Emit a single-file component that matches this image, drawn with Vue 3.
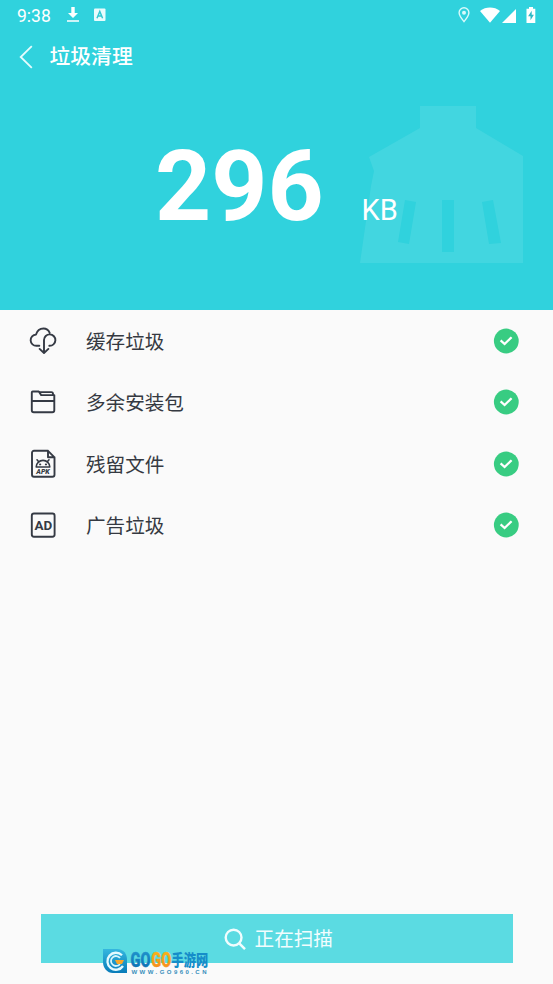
<script setup>
const items = [
  { icon: 'cloud', label: '缓存垃圾' },
  { icon: 'folder', label: '多余安装包' },
  { icon: 'apk', label: '残留文件' },
  { icon: 'ad', label: '广告垃圾' },
]
</script>

<template>
  <main class="screen">
    <section class="hero">
      <div class="status">
        <span class="time">9:38</span>
        <svg class="download" width="14" height="18" viewBox="0 0 14 18">
          <path d="M5.3 1h3.4v6H12l-5 5-5-5h3.3zM1 14.2h12v1.6H1z" fill="#fff" />
        </svg>
        <svg class="badge-a" width="12" height="14" viewBox="0 0 12 14">
          <rect width="11.5" height="12.5" y=".5" rx="1" fill="#e9fcfd" />
          <path d="M3 10.2 5.8 3.4l2.8 6.8M4 8h3.6" fill="none" stroke="#35c8d2" stroke-width="1.5" />
        </svg>
        <span class="spacer"></span>
        <svg class="pin" width="14" height="18" viewBox="0 0 14 18">
          <path d="M7 15.6C4.2 12.1 2.1 9.3 2.1 6.7a4.9 4.9 0 0 1 9.8 0c0 2.6-2.1 5.4-4.9 8.9z" fill="none" stroke="#d9fafb" stroke-width="1.4" />
          <circle cx="7" cy="6.7" r="2" fill="#d9fafb" />
        </svg>
        <svg class="wifi" width="20" height="16" viewBox="0 0 20 16">
          <path d="M0 4C5.8-.6 14.2-.6 20 4L10 15.8z" fill="#fff" />
        </svg>
        <svg class="signal" width="14" height="14" viewBox="0 0 14 14"><path d="M14 0v14H0z" fill="#fff" /></svg>
        <svg class="battery" width="10" height="16" viewBox="0 0 10 16">
          <path d="M3 0h4v1.7h2.3V16H.5V1.7H3z" fill="#fff" />
          <path d="M5.7 3.8 2.1 9.3h2.4v4L7.9 7.8H5.7z" fill="#2fb9c5" />
        </svg>
      </div>
      <header class="header">
        <svg class="back" width="14" height="24" viewBox="0 0 14 24">
          <path d="M12.8 1.2 1.7 12l11.1 10.8" fill="none" stroke="#e5fcfd" stroke-width="1.8" />
        </svg>
        <h1>垃圾清理</h1>
      </header>
      <div class="reading"><strong>296</strong><span>KB</span></div>
      <svg class="broom" width="164" height="158" viewBox="0 0 164 158">
        <path fill-rule="evenodd" fill="#fff" fill-opacity=".09" d="M60 0h56v22l47 28v107H0l11-77 3-15-5-14 51-29zM45 94l-7 42 11 2 7-42zM82 94v52h12V94zM122 96l7 42 12-1-8-43z" />
      </svg>
    </section>

    <ul class="list">
      <li v-for="item in items" :key="item.icon">
        <svg class="item-icon" width="30" height="30" viewBox="0 0 30 30" fill="none" stroke="#353a44" stroke-width="1.9" stroke-linecap="round" stroke-linejoin="round">
          <template v-if="item.icon === 'cloud'">
            <path d="M11.3 19.8H8.5a5.6 5.6 0 0 1-.5-11.2C9.1 4.8 12 2.5 15.5 2.5c2.8 0 5 1.5 6.2 4.3M21.3 19.8a5.7 5.7 0 1 0-5.3-5.7v12.6M11.6 22.9l4.4 4.1 4.4-4.1" />
          </template>
          <template v-else-if="item.icon === 'folder'">
            <path d="M4.8 4.5h6l2.4 3.6h13.1v15.1a2 2 0 0 1-2 2H5.8a2 2 0 0 1-2-2V5.5a1 1 0 0 1 1-1zM4 14h22.3M12 5.1h11.3q1.8 0 1.8 2.4" />
          </template>
          <template v-else-if="item.icon === 'apk'">
            <path d="M6 1.8h14l6.5 6.5v17.5a2 2 0 0 1-2 2H6a2 2 0 0 1-2-2v-22a2 2 0 0 1 2-2zM20 1.8v6.5h6.5" />
            <path d="M8.2 18a6.8 6.6 0 0 1 13.6 0zM10.5 12.6 9 10.8M19.5 12.6l1.5-1.8" stroke-width="1.6" />
            <path d="M12 15.4h.3M17.8 15.4h.3" stroke-width="1.9" />
            <text x="15" y="25.3" class="apk-text">APK</text>
          </template>
          <template v-else>
            <rect x="3.8" y="3.5" width="22.8" height="23.2" rx="2.2" />
            <text x="6.4" y="20" textLength="17.8" lengthAdjust="spacingAndGlyphs" class="ad-text">AD</text>
          </template>
        </svg>
        <span class="label">{{ item.label }}</span>
        <svg class="check" width="26" height="26" viewBox="0 0 26 26">
          <circle cx="13.3" cy="13" r="12.4" fill="#38cc82" />
          <path d="m7.6 12.4 4 3.6 7-6.8" fill="none" stroke="#fff" stroke-width="2.3" />
        </svg>
      </li>
    </ul>

    <button class="scan">
      <svg width="22" height="22" viewBox="0 0 22 22" fill="none" stroke="#f1fdfe" stroke-width="2.4">
        <circle cx="9.6" cy="9.6" r="7.9" /><path d="m15 15.2 6 6" />
      </svg>
      <span>正在扫描</span>
    </button>

    <div class="watermark">
      <svg class="mark-logo" width="25" height="26" viewBox="0 0 25 26">
        <defs>
          <linearGradient id="logo-blue" x2="0" y2="1"><stop stop-color="#35b7df" /><stop offset="1" stop-color="#087bb9" /></linearGradient>
        </defs>
        <path d="M0 1h14c7 0 10 5 10 11v13H10C4 25 0 20 0 14z" fill="url(#logo-blue)" />
        <path d="M19 7.3A8.5 8.5 0 1 0 20 18" fill="none" stroke="#e4faff" stroke-width="2.3" />
        <path d="M17 10a5 5 0 1 0 0 6" fill="none" stroke="#d6f5fd" stroke-width="1.8" />
        <path d="M12 12h9l-2 4h-5z" fill="#f6a72b" />
      </svg>
      <svg class="mark-copy" width="81" height="28" viewBox="0 0 81 28">
        <defs>
          <linearGradient id="name-blue" x2="0" y2="1"><stop stop-color="#239bd2" /><stop offset="1" stop-color="#0869ad" /></linearGradient>
          <linearGradient id="name-orange" x2="0" y2="1"><stop stop-color="#f9ba16" /><stop offset="1" stop-color="#f5861f" /></linearGradient>
        </defs>
        <text class="mark-go" x=".5" y="18.8" textLength="20" lengthAdjust="spacingAndGlyphs" fill="url(#name-blue)" stroke="url(#name-blue)">GO</text>
        <text class="mark-go" x="21.3" y="18.8" textLength="20" lengthAdjust="spacingAndGlyphs" fill="url(#name-orange)" stroke="url(#name-orange)">GO</text>
        <text class="mark-cn" transform="translate(41.5 17.5) scale(.79 1)">手游网</text>
        <text class="mark-url" x="1.5" y="26" textLength="75">WWW.GO960.CN</text>
      </svg>
    </div>
  </main>
</template>

<style>
body { background: #fafafa; }
</style>

<style scoped>
* { box-sizing: border-box; }
.screen { position: relative; display: flex; flex-direction: column; width: 553px; height: 984px; overflow: hidden; background: #fafafa; font-family: Roboto, "Noto Sans CJK SC", sans-serif; }
.hero { position: relative; display: flex; flex-direction: column; height: 310px; background: #30d2dd; color: #fff; }
.status { display: flex; align-items: center; height: 30px; padding: 0 17px; }
.time { width: 49px; font-size: 17.5px; line-height: 30px; padding-top: 1px; }
.badge-a { margin-left: 14px; }
.spacer { flex: 1; }
.wifi { margin-left: 9px; }
.signal { margin-left: 2px; margin-top: 1px; }
.battery { margin-left: 10px; margin-top: -1px; }
.header { display: flex; align-items: center; height: 52px; padding-left: 19px; }
.back { margin-top: 1px; }
h1 { margin: 2px 0 0 16.5px; font-size: 20.8px; line-height: 30px; font-weight: 500; }
.reading { position: relative; z-index: 1; display: flex; align-items: baseline; height: 118px; margin-top: 46px; padding-left: 155px; line-height: 118px; }
.reading strong { width: 206.5px; font-size: 98px; font-weight: 700; }
.reading span { font-size: 29px; }
.broom { position: absolute; left: 360px; top: 106px; }
.list { list-style: none; margin: 0; padding: 0; }
li { display: flex; align-items: center; height: 61.5px; padding: 0 34px 0 28px; }
.label { flex: 1; margin: 4px 0 0 28px; color: #353941; font-size: 19.6px; line-height: 28px; }
.apk-text { fill: #353a44; stroke: none; font: italic 900 7px Roboto, sans-serif; text-anchor: middle; }
.ad-text { fill: #353a44; stroke: none; font: 700 13.6px Roboto, sans-serif; }
.scan { display: flex; align-items: center; justify-content: center; gap: 8.5px; width: 472px; height: 49px; margin: auto 0 21px 40.5px; padding: 0 0 0 4px; border: 0; background: #5bdbe2; color: #f1fdfe; font: 400 19.6px/28px Roboto, "Noto Sans CJK SC", sans-serif; }
.scan span { margin-top: 3px; }
.watermark { position: absolute; left: 103px; top: 948px; display: flex; gap: 2px; }
.mark-go { font: 900 20px Roboto, sans-serif; stroke-width: .4px; }
.mark-cn { fill: #168dc9; font: 900 15.5px "Noto Sans CJK SC", sans-serif; }
.mark-url { fill: #378ebb; font: 700 6px "Liberation Sans", sans-serif; }
</style>
